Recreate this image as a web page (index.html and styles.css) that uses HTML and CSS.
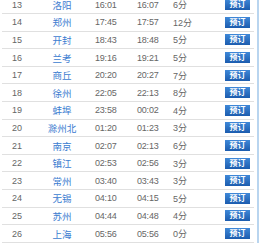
FILE: index.html
```html
<!DOCTYPE html>
<html lang="zh-CN">
<head>
  <meta charset="UTF-8">
  <title>经停站</title>
  <link rel="stylesheet" href="styles.css">
</head>
<body>

  <div class="panel">
    <table class="stops">
      <tr><td class="no">13</td><td class="city"><a href="#">洛阳</a></td><td class="t1">16:01</td><td class="t2">16:07</td><td class="stay">6分</td><td class="op"><a class="btn" href="#">预订</a></td></tr>
      <tr><td class="no">14</td><td class="city"><a href="#">郑州</a></td><td class="t1">17:45</td><td class="t2">17:57</td><td class="stay">12分</td><td class="op"><a class="btn" href="#">预订</a></td></tr>
      <tr><td class="no">15</td><td class="city"><a href="#">开封</a></td><td class="t1">18:43</td><td class="t2">18:48</td><td class="stay">5分</td><td class="op"><a class="btn" href="#">预订</a></td></tr>
      <tr><td class="no">16</td><td class="city"><a href="#">兰考</a></td><td class="t1">19:16</td><td class="t2">19:21</td><td class="stay">5分</td><td class="op"><a class="btn" href="#">预订</a></td></tr>
      <tr><td class="no">17</td><td class="city"><a href="#">商丘</a></td><td class="t1">20:20</td><td class="t2">20:27</td><td class="stay">7分</td><td class="op"><a class="btn" href="#">预订</a></td></tr>
      <tr><td class="no">18</td><td class="city"><a href="#">徐州</a></td><td class="t1">22:05</td><td class="t2">22:13</td><td class="stay">8分</td><td class="op"><a class="btn" href="#">预订</a></td></tr>
      <tr><td class="no">19</td><td class="city"><a href="#">蚌埠</a></td><td class="t1">23:58</td><td class="t2">00:02</td><td class="stay">4分</td><td class="op"><a class="btn" href="#">预订</a></td></tr>
      <tr><td class="no">20</td><td class="city"><a href="#">滁州北</a></td><td class="t1">01:20</td><td class="t2">01:23</td><td class="stay">3分</td><td class="op"><a class="btn" href="#">预订</a></td></tr>
      <tr><td class="no">21</td><td class="city"><a href="#">南京</a></td><td class="t1">02:07</td><td class="t2">02:13</td><td class="stay">6分</td><td class="op"><a class="btn" href="#">预订</a></td></tr>
      <tr><td class="no">22</td><td class="city"><a href="#">镇江</a></td><td class="t1">02:53</td><td class="t2">02:56</td><td class="stay">3分</td><td class="op"><a class="btn" href="#">预订</a></td></tr>
      <tr><td class="no">23</td><td class="city"><a href="#">常州</a></td><td class="t1">03:40</td><td class="t2">03:43</td><td class="stay">3分</td><td class="op"><a class="btn" href="#">预订</a></td></tr>
      <tr><td class="no">24</td><td class="city"><a href="#">无锡</a></td><td class="t1">04:10</td><td class="t2">04:15</td><td class="stay">5分</td><td class="op"><a class="btn" href="#">预订</a></td></tr>
      <tr><td class="no">25</td><td class="city"><a href="#">苏州</a></td><td class="t1">04:44</td><td class="t2">04:48</td><td class="stay">4分</td><td class="op"><a class="btn" href="#">预订</a></td></tr>
      <tr><td class="no">26</td><td class="city"><a href="#">上海</a></td><td class="t1">05:56</td><td class="t2">05:56</td><td class="stay">0分</td><td class="op"><a class="btn" href="#">预订</a></td></tr>
    </table>
  </div>

</body>
</html>
```

FILE: styles.css
```css
body {
  margin: 0;
  background-color: #ffffff;
  font-family: "Liberation Sans", "Noto Sans CJK SC", sans-serif;
  font-size: 9px;
  color: #666666;
}

.panel {
  width: 257px;
  margin-top: -4px;
  border-right: 2px solid #b9d5ef;
}

.stops {
  width: 252px;
  margin-left: 2px;
  border-collapse: collapse;
  table-layout: fixed;
}

.stops td {
  box-sizing: border-box;
  height: 17.6px;
  padding: 0;
  border-bottom: 1px solid #e0e0e0;
  white-space: nowrap;
  overflow: hidden;
}

.no {
  width: 30px;
  text-align: center;
}

.city {
  width: 60px;
  text-align: center;
  font-size: 9.5px;
}

.city a {
  color: #3b7cd0;
  text-decoration: none;
}

.t1,
.t2 {
  letter-spacing: -0.2px;
}

.stops .t1 {
  width: 40px;
  padding-left: 3px;
}

.stops .t2 {
  width: 36px;
  padding-left: 5px;
}

.stops .stay {
  width: 44px;
  padding-left: 5px;
}

.stops .op {
  width: 42px;
  padding-left: 13px;
}

.btn {
  display: block;
  width: 25px;
  height: 11px;
  line-height: 11px;
  text-align: center;
  font-size: 8px;
  font-weight: bold;
  color: #ffffff;
  text-decoration: none;
  background: linear-gradient(#3f88d8, #1c5cae);
}
```
